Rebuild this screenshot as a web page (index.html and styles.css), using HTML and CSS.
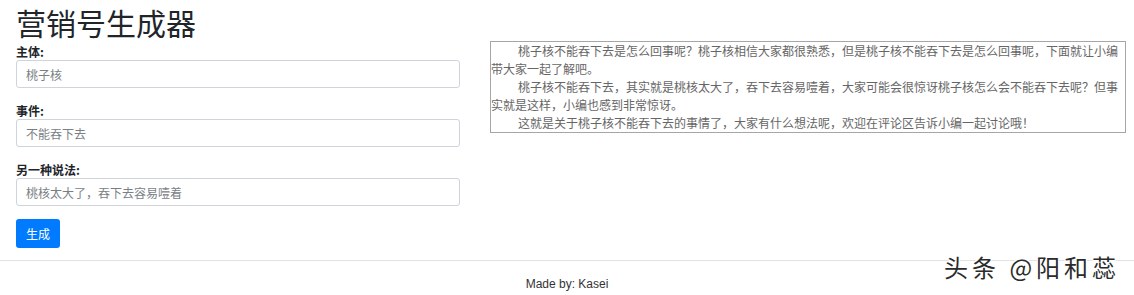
FILE: index.html
```html
<!DOCTYPE html>
<html lang="zh-CN">
<head>
<meta charset="utf-8">
<title>营销号生成器</title>
<link rel="stylesheet" href="styles.css">
</head>
<body>
<div class="page">
  <div class="main">
    <div class="left">
      <h1 class="title">营销号生成器</h1>
      <div class="group">
        <label class="label">主体:</label>
        <input class="field" type="text" placeholder="桃子核">
      </div>
      <div class="group">
        <label class="label">事件:</label>
        <input class="field" type="text" placeholder="不能吞下去">
      </div>
      <div class="group group-last">
        <label class="label">另一种说法:</label>
        <input class="field" type="text" placeholder="桃核太大了，吞下去容易噎着">
      </div>
      <button class="btn" type="button">生成</button>
    </div>
    <div class="output">
      <p class="para">桃子核不能吞下去是怎么回事呢？桃子核相信大家都很熟悉，但是桃子核不能吞下去是怎么回事呢，下面就让小编带大家一起了解吧。</p>
      <p class="para">桃子核不能吞下去，其实就是桃核太大了，吞下去容易噎着，大家可能会很惊讶桃子核怎么会不能吞下去呢？但事实就是这样，小编也感到非常惊讶。</p>
      <p class="para">这就是关于桃子核不能吞下去的事情了，大家有什么想法呢，欢迎在评论区告诉小编一起讨论哦！</p>
    </div>
  </div>
  <hr class="rule">
  <footer class="footer">Made by: Kasei</footer>
  <div class="watermark">头条 @阳和蕊</div>
</div>
</body>
</html>
```

FILE: styles.css
```css
html, body {
  margin: 0;
  padding: 0;
  background: #ffffff;
}

body {
  font-family: "Liberation Sans", "Noto Sans CJK SC", sans-serif;
  color: #212529;
  font-size: 12px;
}

.page {
  position: relative;
  width: 1134px;
  height: 295px;
  overflow: hidden;
}

.main {
  display: flex;
  align-items: flex-start;
  gap: 30px;
  padding: 0 8px 0 16px;
}

.left {
  width: 444px;
  flex: none;
  display: flex;
  flex-direction: column;
  align-items: flex-start;
}

.title {
  margin: 0;
  font-family: "Noto Sans CJK SC", sans-serif;
  font-size: 30px;
  font-weight: 400;
  line-height: 44px;
  color: #212529;
}

.group {
  display: flex;
  flex-direction: column;
  width: 100%;
  margin-bottom: 15px;
}

.group-last {
  margin-bottom: 13px;
}

.label {
  font-family: "Noto Sans CJK SC", sans-serif;
  font-weight: 700;
  font-size: 12px;
  line-height: 16px;
  color: #212529;
}

.field {
  box-sizing: border-box;
  width: 100%;
  height: 28px;
  margin: 0;
  padding: 0 9px;
  border: 1px solid #ced4da;
  border-radius: 3px;
  font-family: "Noto Sans CJK SC", sans-serif;
  font-size: 12px;
  color: #495057;
  background: #fff;
  outline: none;
}

.field::placeholder {
  color: #7a7f85;
}

.btn {
  box-sizing: border-box;
  height: 29px;
  width: 44px;
  padding: 0;
  border: none;
  border-radius: 3px;
  background: #007bff;
  color: #ffffff;
  font-family: "Noto Sans CJK SC", sans-serif;
  font-size: 12px;
  line-height: 29px;
  cursor: pointer;
}

.output {
  flex: 1;
  margin-top: 41px;
  border: 1px solid #a6a6a6;
  padding: 0;
  font-family: "Noto Sans CJK SC", sans-serif;
  font-size: 12px;
  line-height: 18px;
  color: #666666;
}

.para {
  margin: 0;
  text-indent: 27px;
}

.rule {
  margin: 12px 0 0;
  border: 0;
  border-top: 1px solid #e2e2e2;
  height: 0;
}

.footer {
  text-align: center;
  padding-top: 15px;
  font-size: 12px;
  line-height: 16px;
  color: #333333;
}

.watermark {
  position: absolute;
  left: 944px;
  top: 252px;
  font-family: "Noto Sans CJK SC", sans-serif;
  font-size: 24px;
  line-height: 30px;
  letter-spacing: 4px;
  color: #2b2b2b;
  text-shadow: 1px 1px 0 #ffffff, -1px -1px 0 #ffffff, 1px -1px 0 #ffffff, -1px 1px 0 #ffffff;
  white-space: nowrap;
}
```
